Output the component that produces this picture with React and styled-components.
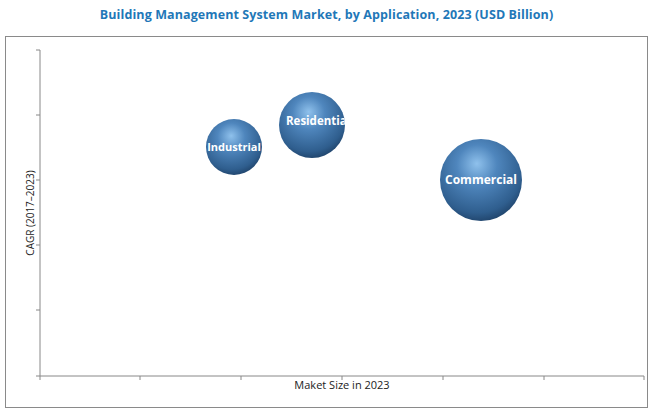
import React from "react";
import styled, { createGlobalStyle } from "styled-components";

const G = createGlobalStyle`
  html,body{margin:0;padding:0;background:#fff;}
  body{font-family:"Open Sans","Liberation Sans",sans-serif;}
`;
const Page = styled.div`
  width:661px;height:414px;display:flex;flex-direction:column;align-items:center;box-sizing:border-box;padding:6px 13px 6px 5px;
`;
const Title = styled.div`
  color:#1f78b8;font-weight:700;font-size:12.5px;height:31px;line-height:18px;letter-spacing:0.1px;
`;
const Frame = styled.div`
  align-self:stretch;flex:1;border:1px solid #8a8a8a;position:relative;
`;
const Svg = styled.svg`display:block;`;

const bubbles = [
  { cx: 233, cy: 148, r: 28, label: "Industrial", fs: 11 },
  { cx: 311, cy: 126, r: 33, label: "Residential", fs: 11.5, dy: -4 },
  { cx: 480, cy: 181, r: 41, label: "Commercial", fs: 12 },
];

export default function App() {
  const xt = [39, 139, 240, 341, 442, 543, 643];
  const yt = [51, 116, 181, 246, 311, 377];
  return (
    <Page>
      <G />
      <Title>Building Management System Market, by Application, 2023 (USD Billion)</Title>
      <Frame>
        <Svg width="643" height="370" viewBox="5 38 643 370">
          <defs>
            <radialGradient id="g" cx="0.45" cy="0.35" r="0.7" fx="0.45" fy="0.3">
              <stop offset="0" stopColor="#8fc1ec" />
              <stop offset="0.35" stopColor="#4f86bd" />
              <stop offset="0.8" stopColor="#2f5e8e" />
              <stop offset="1" stopColor="#1c3d62" />
            </radialGradient>
            {bubbles.map((b, i) => (
              <clipPath id={"c" + i} key={i}><circle cx={b.cx} cy={b.cy} r={b.r} /></clipPath>
            ))}
          </defs>
          <line x1="39" y1="51" x2="39" y2="377" stroke="#888" />
          <line x1="39" y1="377" x2="643" y2="377" stroke="#888" />
          {yt.map(y => <line key={y} x1="35" y1={y} x2="39" y2={y} stroke="#888" />)}
          {xt.map(x => <line key={x} x1={x} y1="377" x2={x} y2="381" stroke="#888" />)}
          <text x="341" y="390" fontSize="11" textAnchor="middle" fill="#222" fontFamily="Open Sans, Liberation Sans, sans-serif">Maket Size in 2023</text>
          <text transform="translate(33 214) rotate(-90)" fontSize="10" textAnchor="middle" fill="#222" fontFamily="Open Sans, Liberation Sans, sans-serif">CAGR (2017–2023)</text>
          {bubbles.map((b, i) => (
            <g key={i}>
              <circle cx={b.cx} cy={b.cy} r={b.r} fill="url(#g)" />
              <text clipPath={`url(#c${i})`} x={b.label === "Residential" ? b.cx - 26 : b.cx} y={b.cy + (b.dy || 0) + 4} fontSize={b.fs} fontWeight="700" fill="#fff" textAnchor={b.label === "Residential" ? "start" : "middle"} fontFamily="Open Sans, Liberation Sans, sans-serif">{b.label}</text>
            </g>
          ))}
        </Svg>
      </Frame>
    </Page>
  );
}
